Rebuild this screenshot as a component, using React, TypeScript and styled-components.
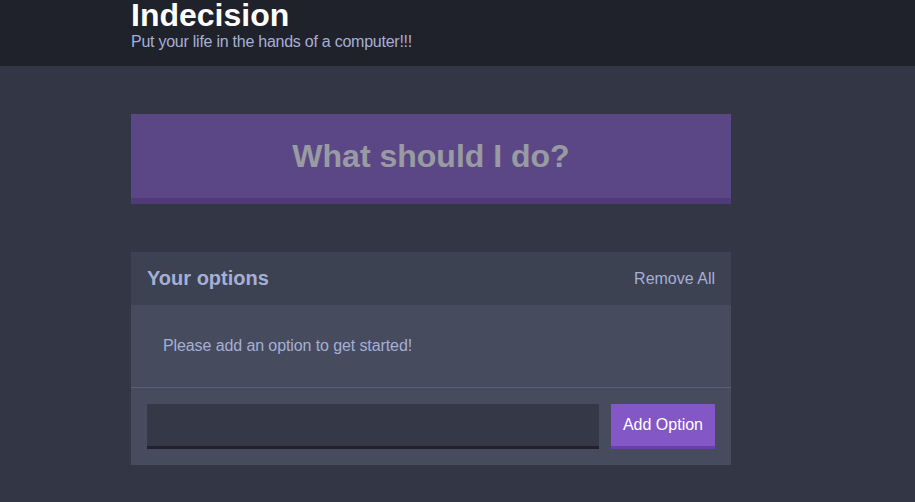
import styled, { createGlobalStyle } from "styled-components";

const GlobalStyle = createGlobalStyle`
  body {
    margin: 0;
    background: #333745;
    font-family: "Liberation Sans", Arial, sans-serif;
    color: #a5afd7;
  }
`;

const Page = styled.div`
  min-height: 100vh;
  background: #333745;
`;

const Header = styled.header`
  background: #20222b;
  height: 66px;
  box-sizing: border-box;
`;

const Container = styled.div`
  width: 600px;
  margin: 0 0 0 131px;
`;

const Title = styled.h1`
  margin: 0;
  color: #ffffff;
  font-size: 32px;
  line-height: 30px;
  font-weight: 700;
`;

const Subtitle = styled.h2`
  margin: 3px 0 0;
  color: #a5afd7;
  font-size: 16px;
  line-height: 18px;
  font-weight: 400;
  letter-spacing: -0.25px;
`;

const Main = styled(Container)`
  padding-top: 48px;
`;

const BigButton = styled.button`
  display: block;
  width: 100%;
  background: #8357c5;
  border: none;
  border-bottom: 6px solid #6a3fab;
  color: #ffffff;
  font-family: inherit;
  font-size: 32px;
  line-height: 36px;
  font-weight: 700;
  padding: 24px;
  margin: 0 0 48px;
  &:disabled {
    opacity: 0.5;
  }
`;

const Widget = styled.div`
  background: #464b5e;
  margin-bottom: 48px;
`;

const WidgetHeader = styled.div`
  background: #3c4251;
  display: flex;
  align-items: center;
  justify-content: space-between;
  padding: 16px;
`;

const WidgetTitle = styled.h3`
  margin: 0;
  font-size: 20px;
  line-height: 21px;
  font-weight: 700;
  color: #a5afd7;
`;

const LinkButton = styled.button`
  background: none;
  border: none;
  padding: 0;
  color: #a5afd7;
  font-family: inherit;
  font-size: 16px;
  line-height: 18px;
`;

const Message = styled.p`
  margin: 0;
  padding: 32px;
  font-size: 16px;
  line-height: 18px;
  color: #a5afd7;
  letter-spacing: -0.1px;
  border-bottom: 1px solid #5a5f75;
`;

const Form = styled.form`
  display: flex;
  padding: 16px;
`;

const Input = styled.input`
  flex-grow: 1;
  background: #353846;
  border: none;
  border-bottom: 3px solid #202129;
  color: #a5afd7;
  font-family: inherit;
  font-size: 16px;
  line-height: 18px;
  padding: 12px;
  margin: 0 12px 0 0;
  outline: none;
`;

const Button = styled.button`
  background: #8357c5;
  border: none;
  border-bottom: 3px solid #6a3fab;
  color: #ffffff;
  font-family: inherit;
  font-size: 16px;
  line-height: 18px;
  padding: 12px;
`;

const App = () => {
  return (
    <Page>
      <GlobalStyle />
      <Header>
        <Container>
          <Title>Indecision</Title>
          <Subtitle>Put your life in the hands of a computer!!!</Subtitle>
        </Container>
      </Header>
      <Main>
        <BigButton disabled>What should I do?</BigButton>
        <Widget>
          <WidgetHeader>
            <WidgetTitle>Your options</WidgetTitle>
            <LinkButton>Remove All</LinkButton>
          </WidgetHeader>
          <Message>Please add an option to get started!</Message>
          <Form onSubmit={(e) => e.preventDefault()}>
            <Input type="text" name="option" />
            <Button>Add Option</Button>
          </Form>
        </Widget>
      </Main>
    </Page>
  );
};

export default App;
